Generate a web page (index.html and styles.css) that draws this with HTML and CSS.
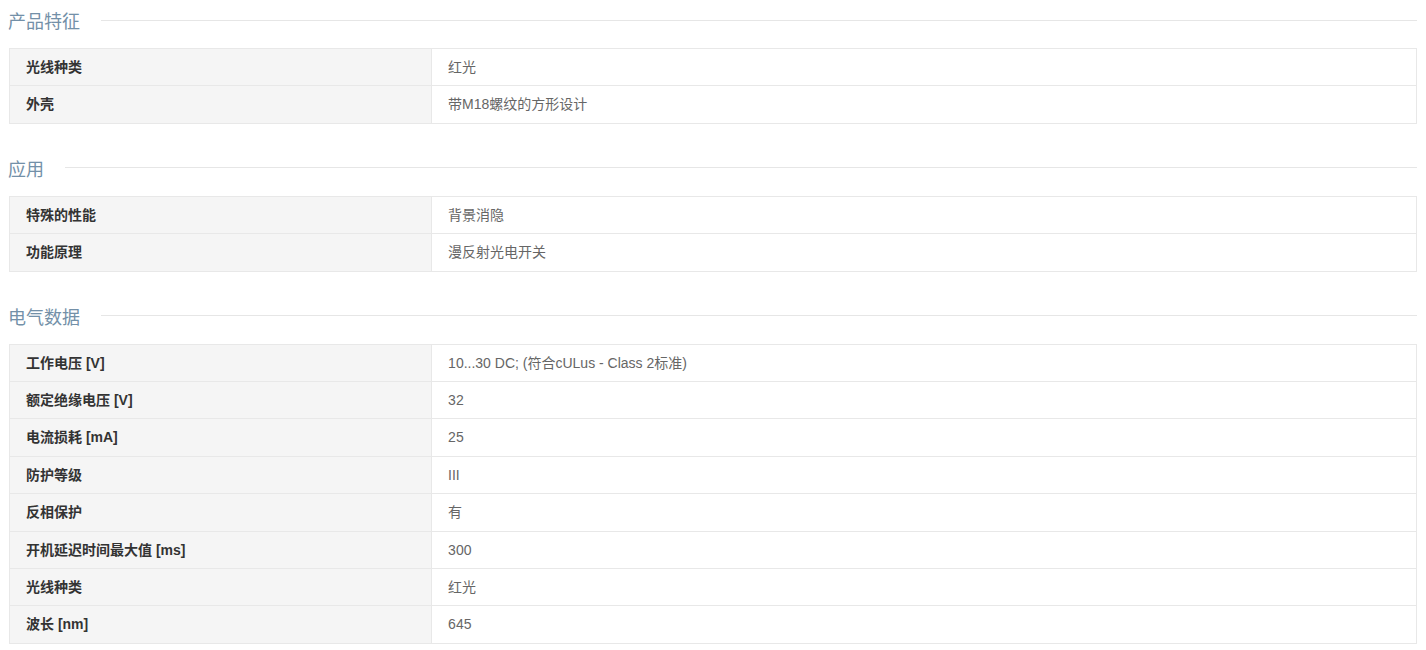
FILE: index.html
```html
<!DOCTYPE html>
<html lang="zh-CN">
<head>
  <meta charset="UTF-8" />
  <title>技术参数</title>
  <link rel="stylesheet" href="styles.css">
</head>
<body>
  <div class="spec">
    <h2 class="spec-title"><span>产品特征</span></h2>
    <table class="spec-table">
      <tr><th>光线种类</th><td>红光</td></tr>
      <tr><th>外壳</th><td>带M18螺纹的方形设计</td></tr>
    </table>
  </div>

  <div class="spec">
    <h2 class="spec-title"><span>应用</span></h2>
    <table class="spec-table">
      <tr><th>特殊的性能</th><td>背景消隐</td></tr>
      <tr><th>功能原理</th><td>漫反射光电开关</td></tr>
    </table>
  </div>

  <div class="spec">
    <h2 class="spec-title"><span>电气数据</span></h2>
    <table class="spec-table">
      <tr><th>工作电压 [V]</th><td>10...30 DC; (符合cULus - Class 2标准)</td></tr>
      <tr><th>额定绝缘电压 [V]</th><td>32</td></tr>
      <tr><th>电流损耗 [mA]</th><td>25</td></tr>
      <tr><th>防护等级</th><td>III</td></tr>
      <tr><th>反相保护</th><td>有</td></tr>
      <tr><th>开机延迟时间最大值 [ms]</th><td>300</td></tr>
      <tr><th>光线种类</th><td>红光</td></tr>
      <tr><th>波长 [nm]</th><td>645</td></tr>
    </table>
  </div>
</body>
</html>
```

FILE: styles.css
```css
* {
  margin: 0;
  padding: 0;
  box-sizing: border-box;
}

body {
  font-family: "Liberation Sans", "Noto Sans CJK SC", sans-serif;
  font-size: 14px;
  color: #555;
  background: #fff;
  padding: 0 9px 0 8px;
}

.spec + .spec {
  margin-top: 24px;
}

/* section heading with a rule running to the right */
.spec-title {
  display: flex;
  align-items: center;
  height: 40px;
  font-size: 18px;
  font-weight: normal;
  color: #7390a8;
}

.spec-title::after {
  content: "";
  flex: 1;
  height: 1px;
  margin-left: 21px;
  background: #e6e6e6;
}

.spec-table {
  width: calc(100% - 1px);
  margin: 8px 0 0 1px;
  border-collapse: collapse;
  border: 1px solid #e8e8e8;
}

.spec-table th,
.spec-table td {
  border-top: 1px solid #e8e8e8;
  padding: 8px 16px;
  line-height: 20.4px;
  font-size: 14px;
  text-align: left;
  vertical-align: middle;
}

.spec-table th {
  width: 30%;
  background: #f5f5f5;
  color: #333;
  font-weight: bold;
  border-right: 1px solid #e8e8e8;
}

.spec-table td {
  color: #666;
}
```
